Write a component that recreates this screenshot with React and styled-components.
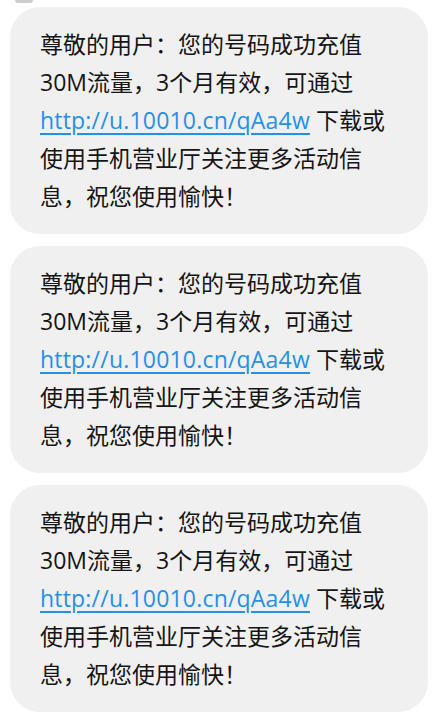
import React from "react";
import styled, { createGlobalStyle } from "styled-components";

const Global = createGlobalStyle`
  html, body { margin: 0; padding: 0; background: #ffffff; }
  body { font-family: "Open Sans", "Noto Sans CJK SC", sans-serif; }
`;

const TopSliver = styled.div`
  width: 18px;
  height: 3px;
  margin: 0 0 4px 15px;
  background: #cdcdcd;
  border-radius: 0 0 3px 3px;
`;

const List = styled.div`
  display: flex;
  flex-direction: column;
  gap: 12px;
  padding: 0 8px 0 10px;
`;

const Bubble = styled.div`
  background: #f0f0f0;
  border-radius: 30px;
  height: 227px;
  box-sizing: border-box;
  padding: 18px 20px 18px 30px;
`;

const Text = styled.p`
  margin: 0;
  font-family: "Open Sans", "Noto Sans CJK SC", sans-serif;
  font-size: 23px;
  line-height: 38px;
  color: #151515;
  white-space: nowrap;
`;

const Link = styled.a`
  color: #2590e8;
  letter-spacing: 0.2px;
  text-decoration: underline;
  text-decoration-thickness: 1.5px;
  text-underline-offset: 4px;
`;

const Message = () => (
  <Bubble>
    <Text>
      尊敬的用户：您的号码成功充值<br />
      30M流量，3个月有效，可通过<br />
      <Link href="#">http://u.10010.cn/qAa4w</Link> 下载或<br />
      使用手机营业厅关注更多活动信<br />
      息，祝您使用愉快！
    </Text>
  </Bubble>
);

export default function App() {
  return (
    <>
      <Global />
      <TopSliver />
      <List>
        <Message />
        <Message />
        <Message />
      </List>
    </>
  );
}
